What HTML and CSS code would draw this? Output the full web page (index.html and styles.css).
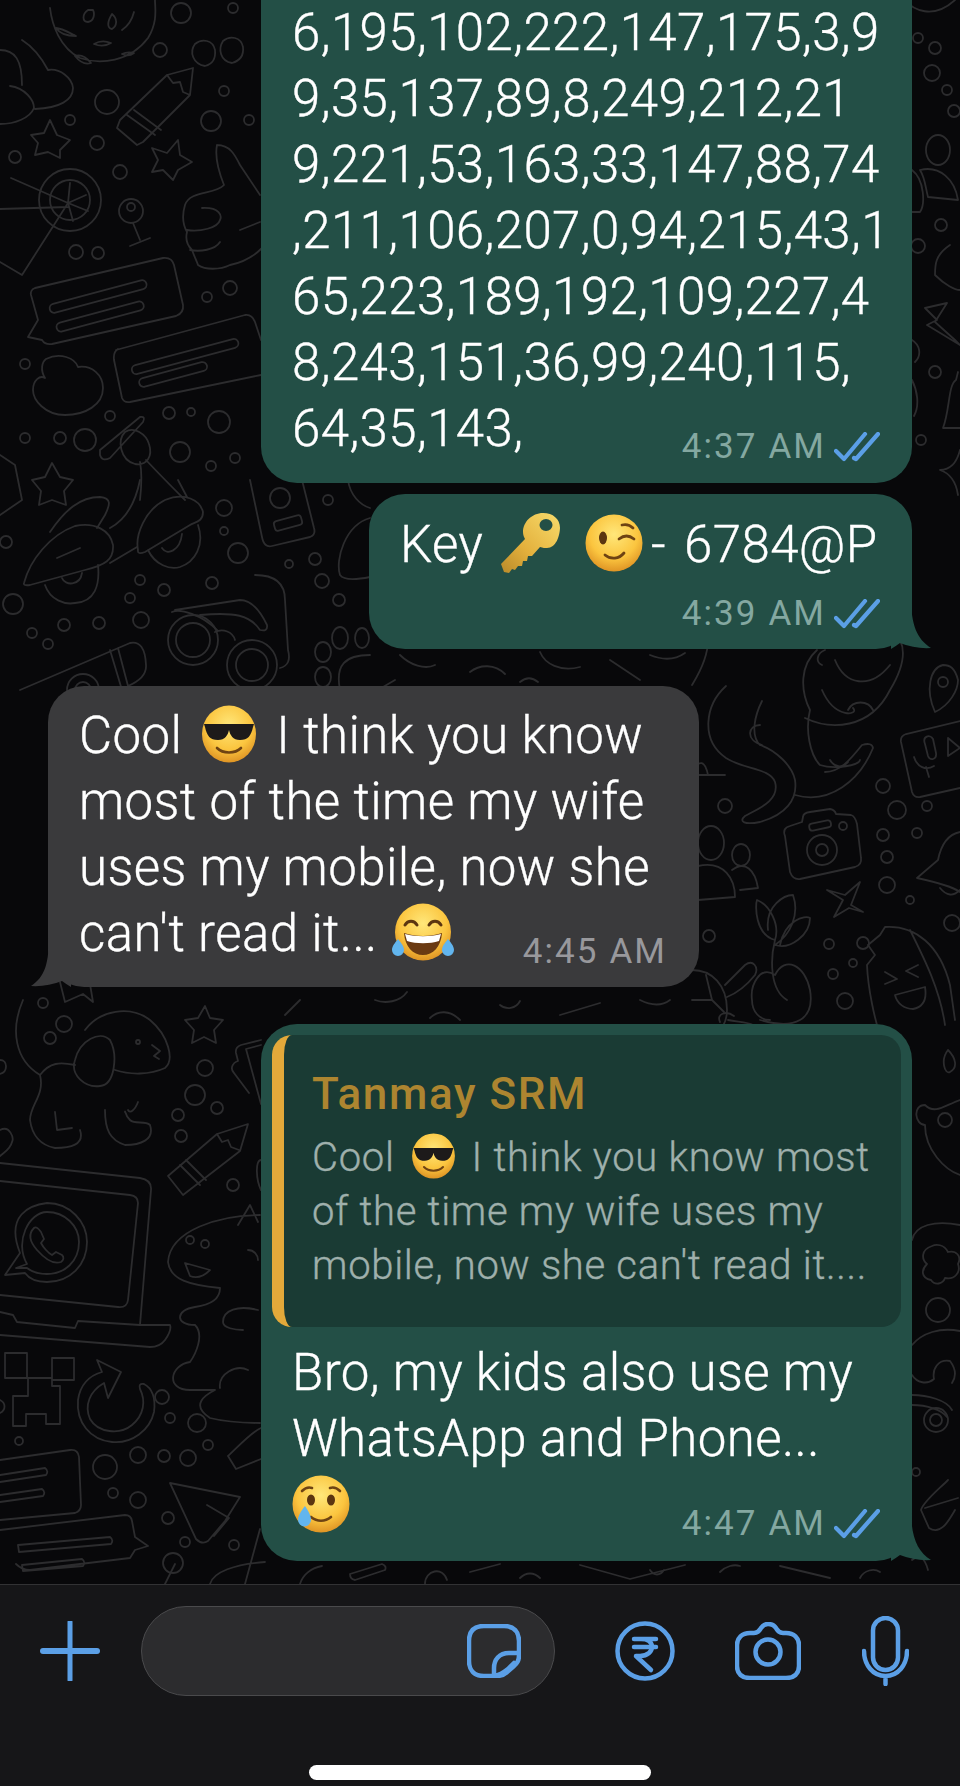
FILE: index.html
```html
<!DOCTYPE html>
<html lang="en">
<head>
<meta charset="UTF-8">
<meta name="viewport" content="width=device-width, initial-scale=1.0">
<title>Chat</title>
<link rel="stylesheet" href="styles.css">
</head>
<body>

<svg class="sprites" width="0" height="0">
    <defs>
        <radialGradient id="face" cx="50%" cy="35%" r="70%">
            <stop offset="0" stop-color="#ffe77a"/>
            <stop offset="0.6" stop-color="#fbc53f"/>
            <stop offset="1" stop-color="#d98a1f"/>
        </radialGradient>
        <linearGradient id="gold" x1="1" y1="0" x2="0" y2="1">
            <stop offset="0" stop-color="#f8dc6c"/>
            <stop offset="0.6" stop-color="#e3b03c"/>
            <stop offset="1" stop-color="#b98a2a"/>
        </linearGradient>
        <symbol id="check" viewBox="0 0 46 30">
            <path d="M2 19l8 8 21-25M20 26l2 1L44 2" fill="none" stroke="#5b9fe6" stroke-width="4.200" stroke-linecap="round" stroke-linejoin="round"/>
        </symbol>
        <symbol id="cool" viewBox="0 0 56 58">
            <ellipse cx="28" cy="29" rx="27" ry="28.5" fill="url(#face)"/>
            <path d="M3 19h50l-1 3c-2 9-5 13-13 13-7 0-10-5-11-10-1 5-4 10-11 10-8 0-11-4-13-13z" fill="#1d1a1a"/>
            <path d="M16 43c6 6 18 6 24 0" fill="none" stroke="#6e4313" stroke-width="2.6" stroke-linecap="round"/>
        </symbol>
        <symbol id="wink" viewBox="0 0 58 58">
            <circle cx="29" cy="29" r="28.5" fill="url(#face)"/>
            <ellipse cx="18" cy="24" rx="4" ry="6.5" fill="#5b3510"/>
            <path d="M34 25c5-4 10-4 15 0M37 11c4-1 8 0 11 3M20 41c6 5 14 4 19-2" fill="none" stroke="#6e4313" stroke-width="2.8" stroke-linecap="round"/>
        </symbol>
        <symbol id="laugh" viewBox="0 0 66 58">
            <ellipse cx="33" cy="29" rx="28" ry="28.5" fill="url(#face)"/>
            <path d="M15 22c3-5 9-5 12 0M39 22c3-5 9-5 12 0" fill="none" stroke="#5b3510" stroke-width="3" stroke-linecap="round"/>
            <path d="M14 30c12 4 26 4 38 0-1 14-9 22-19 22S15 44 14 30z" fill="#6a3a12"/>
            <path d="M15 31c11 3 25 3 36 0l-2 7c-9 3-23 3-32 0z" fill="#fff"/>
            <path d="M8 36c3 4 6 7 6 11a6 6 0 0 1-12 0c0-4 3-7 6-11zM58 36c-3 4-6 7-6 11a6 6 0 0 0 12 0c0-4-3-7-6-11z" fill="#62b5ee"/>
        </symbol>
        <symbol id="smiletear" viewBox="0 0 58 58">
            <circle cx="29" cy="29" r="28.5" fill="url(#face)"/>
            <ellipse cx="19" cy="25" rx="4" ry="5.5" fill="#5b3510"/>
            <ellipse cx="39" cy="25" rx="4" ry="5.5" fill="#5b3510"/>
            <path d="M10 16c3-3 7-4 10-3M38 13c3-1 7 0 10 3M19 42c6 5 14 5 20 0" fill="none" stroke="#6e4313" stroke-width="2.6" stroke-linecap="round"/>
            <path d="M13 31c4 6 6 10 6 14a6.500 6.500 0 0 1-13 0c0-4 3-9 7-14z" fill="#62b5ee"/>
        </symbol>
        <symbol id="key" viewBox="0 0 62 62">
            <path d="M60 16c0-9-7-15-17-15-11 0-20 9-20 19 0 3 1 5 2 7L1 52l3 8 5 1 3-4 3 1 3-4 4 0 1-5 4 0 1-5 4 0 8-9c3 1 5 1 7 1 9 0 13-12 13-21z" fill="url(#gold)"/>
            <ellipse cx="46" cy="13" rx="6.500" ry="6" fill="#234f46"/>
        </symbol>
    </defs>
</svg>

<div class="phone">
    <div class="chat">
        <svg class="doodles" viewBox="0 0 960 1584" width="960" height="1584" fill="none" stroke="#2c2c2e" stroke-width="1.8" stroke-linecap="round" stroke-linejoin="round">
            <!-- top left -->
            <path d="M50 8c2 17 10 40 30 50 20 7 50 4 68-20 10-16 7-30 7-38M88 10c-6 4-6 12 0 12 6-1 7-8 5-12zM112 14c-5 8-5 14 0 15 5-3 6-10 0-15zM134 12c-2 8-6 14-12 18M94 44c5-3 12-3 17-1-5 3-12 3-17 1zM75 56c6-2 12 2 16 7-6 2-12-2-16-7zM122 54c4-2 8-2 12-1-4 3-8 3-12 1zM56 28c5 0 12 4 20 8-8 0-16-2-20-8z"/>
            <path d="M0 50c15 0 22 10 22 35M10 86c15 2 24 14 24 22-4 10-19 16-34 16M48 70c12-2 24 8 25 18 0 12-13 20-38 21M22 40c8 5 18 15 26 30"/>
            <path d="M193 68l-26 7-47 45-3 8 20 17 6-3 47-47zM127 115l28 20M134 110l27 20M167 75l6 8 7-1 3 10 7 3"/>
            <path d="M205 66c-12-2-16-14-10-22 7-6 18-4 20 6 1 10-3 14-10 16zM232 63c-12-2-14-14-9-22 7-6 18-4 20 6 1 9-4 14-11 16z"/>
            <path d="M50 120l7 15 13 5-10 10v8l-12-6-13 3 3-12-7-8 13-2zM178 140l2 15 12 7-14 8-5 10-10-10-11 2 6-12-6-12 15 5z"/>
            <path d="M217 145c13 0 18 10 23 20l20 30M217 145c-2 10 1 25 7 40-9 10-34 5-39 20-3 10-2 20 2 27-2 8 0 13 5 18 3 8 5 12 6 15 7 5 22 5 32 0 15-3 25-10 32-17M202 208c18-1 20 8 18 12-2 8-20 12-33 10M190 250c10 2 25 0 30-8M240 230l20-8"/>
            <circle cx="70" cy="200" r="31"/><circle cx="70" cy="200" r="20"/>
            <path d="M68 203l2-20M68 203l18-8M68 203l20 8M68 203l5 18M11 178l57 25-46 72-22-13M0 209l68-2"/>
            <circle cx="131" cy="211" r="12"/><circle cx="131" cy="207" r="4"/>
            <path d="M133 223l7 17M130 246l20-8"/>
            <path d="M35 288l128-30q9-1 11 7l9 40q1 8-7 11L52 344q-7 1-10-4l-14-3 10-17-7-25q-1-5 4-7z"/>
            <rect x="48" y="292" width="100" height="9" rx="4.500" transform="rotate(-15 98 296)"/>
            <rect x="55" y="312" width="90" height="9" rx="4.500" transform="rotate(-15 100 316)"/>
            <path d="M116 350l129-35q7-1 10 7l6 18M261 375l-131 27q-6 1-8-4l-8-38q-1-8 4-11"/>
            <rect x="130" y="352" width="110" height="9" rx="4.500" transform="rotate(-15 185 356)"/>
            <rect x="138" y="370" width="70" height="9" rx="4.500" transform="rotate(-15 173 374)"/>
            <path d="M46 359c14-7 29-1 32 8 14-2 25 8 25 21 0 17-18 27-38 27s-32-15-32-25 7-15 12-12c-5-8-3-16 1-19z"/>
            <path d="M100 450l40-33q6-1 3 5l-33 36q-8 4-10-3zM125 432c-8 8-5 28 10 32 12 2 18-8 14-20-3-10-15-18-24-12zM146 460c14 15 29 30 39 40M140 462c2 10 2 20 0 38"/>
            <path d="M52 463l8 14 13 3-9 11 2 14-14-5-13 5 2-14-9-11 13-3zM0 455l15 10 7 35-22 15"/>
            <!-- scooter and glasses -->
            <path d="M24 583c6-23 26-48 51-57 20-4 35 4 38 19 1 15-8 20-28 25l-55 15q-7 1-6-2zM50 532c15-22 30-35 50-35 12 1 10 8 5 18l-8 13M110 528c15-8 25-23 30-48M45 585c5 15 20 20 30 18 20-1 25-18 23-38M57 558l23-10M62 578c3 8 18 8 20-5M110 563l27-16"/>
            <path d="M138 550c-3-15 7-40 27-50 20-8 35 0 38 12 0 10-8 10-13 13l-45 27q-8 3-7-2zM148 550c7 15 22 20 32 17 15-5 25-22 18-42M162 548c5 8 18 3 20-14M178 480l9 17"/>
            <path d="M250 480l12 57q2 11 10 9l38-9q6-2 4-9l-12-48"/>
            <circle cx="280" cy="498" r="10"/>
            <rect x="274" y="518" width="28" height="10" rx="3" transform="rotate(-15 288 523)"/>
            <circle cx="193" cy="640" r="25"/><circle cx="193" cy="640" r="17"/>
            <circle cx="252" cy="665" r="25"/><circle cx="252" cy="665" r="16"/>
            <path d="M175 610l65-10q15 0 27 25 1 7-7 5c-10-15-25-18-60-15M172 612c8-4 30 3 45 18M255 575q30 0 30 25l3 50q4 15-8 18M215 632c8-4 18 0 20 8"/>
            <ellipse cx="340" cy="638" rx="8" ry="11"/><ellipse cx="362" cy="638" rx="7" ry="10"/>
            <ellipse cx="323" cy="652" rx="8" ry="10"/><ellipse cx="323" cy="677" rx="8" ry="10"/>
            <path d="M340 690c-5-25 5-35 30-35M20 690l110-47q15-3 16 22 1 13-18 21M110 650l12 40M118 648l10 38M370 518c-25 7-35 42-30 57q5 7 30 2M348 480c2 15 12 25 22 28"/>
            <circle cx="83" cy="690" r="16"/><circle cx="83" cy="690" r="8"/>
            <path d="M400 655c10 10 25 15 35 10M470 672c10-8 25-8 35 2M540 652c5 12 20 20 40 15M610 660l30 20M650 655c12 5 25 5 35-2M395 680l-12 7M520 682c6-5 12-5 18 0"/>
            <!-- right of the incoming bubble -->
            <path d="M708 640c0 20-13 40-16 45M726 686c-21 19-26 54 0 72 19 12 44 10 49 24 5 18-15 26-30 34-7 6 0 9 15 6 25-7 38-22 35-42-3-15-20-30-35-35-10-10-5-30 2-44M760 725c-12 0-15 15 2 20M795 795c35 10 65-15 78-47q-1-6-11-3c-12 15-22 27-37 27"/>
            <path d="M690 775c15 0 30 0 35 0M690 770c10-10 15-10 18 5"/>
            <path d="M817 650c-17 15-17 40-7 60-5 20 0 45 10 55 15 5 40 0 40-5M805 718c25 12 65 12 85-28 15-25 15-40 10-50M835 660c10 25 35 30 55 5M822 690c13 30 38 25 31 18M830 760c5 8 12 8 18 2M848 710c5-10 20-10 25 0M825 650c-8 3-10 12-3 15"/>
            <path d="M943 665c-13 3-18 25-8 47 15-7 23-22 23-32-3-12-8-15-15-15z"/>
            <circle cx="943" cy="682" r="5"/>
            <path d="M960 721l-54 13q-6 2-5 8l11 50q2 6 8 5l40-9M925 744c-3-8 5-10 8-5l3 14c1 7-6 8-8 3zM914 757c3 10 12 14 20 9M926 767l3 10M948 738l12 10-12 8z"/>
            <path d="M785 836q-3-8 5-10l12-4 1-5q0-4 7-5l20-3q5 1 6 5l15 1q4 1 6 9l4 34q1 7-6 9l-55 12q-7 1-10-7z"/>
            <circle cx="822" cy="850" r="15"/><circle cx="822" cy="850" r="6"/><circle cx="843" cy="826" r="4"/>
            <rect x="809" y="822" width="22" height="7" rx="3" transform="rotate(-12 820 825)"/>
            <path d="M960 832c-15 3-20 18-22 28l-21 18q33 7 43 14M940 888q10 12 20 2"/>
            <path d="M860 882l-9 23 12 7-14-4-15 9 9-17-16-10 18 5z"/>
            <ellipse cx="711" cy="843" rx="13" ry="17"/><ellipse cx="741" cy="855" rx="9" ry="11"/>
            <path d="M698 866c27-6 37 14 37 31l-37 3M732 870c13-10 23 0 26 18l-18 2"/>
            <path d="M760 1020c35 10 55 0 50-30-5-25-25-35-35-15-15-10-25 10-23 25 0 12 8 20 18 20M787 1000c-17-10-17-40-12-60M775 940c-20-5-20-35-18-40 13 5 23 25 18 40M768 930c-3-25 17-35 25-35 7 20-3 40-18 50M780 945c5-25 25-30 30-27 0 17-20 32-35 27"/>
            <path d="M867 965l8-10-7-10 12-10 5-8c30-2 55 18 65 58l5 35M867 965c1 25 8 55 13 70M910 930c15 30 30 60 35 95M885 972l12 7-12 5M918 965l-12 6 12 6M895 995l30-8c2 12-2 20-12 22-8 0-16-5-18-14z"/>
            <path d="M692 970c20 0 35 15 35 40 0 20-15 30-35 32M725 985l20-20c8-6 14 2 10 10-8 10-18 18-28 22M692 1000l20 0 12 12M712 1000l-6-25M728 1020c10 2 20 2 25 5-5 6-15 6-27 2"/>
            <ellipse cx="938" cy="150" rx="12" ry="15"/>
            <path d="M920 170c20-5 35 10 38 30l-30-3c-3-12-3-19-8-27zM912 170c13 10 13 35 8 42h-8M950 245c-15 10-15 20-15 30 10 10 20 15 25 15M925 308l22-5-12 19 20 18 5 5M925 308l12 12-10 5 33 20M958 372l-2 8c-8 5-6 30-13 48h17M960 450q-5 20-20 20 15 5 18 25M912 380c5 10 8 25 2 36M912 340c8 5 10 15 3 22M905 0c8 10 28 20 50 0"/>
            <!-- dog, laptop and friends -->
            <path d="M85 1030c15-20 45-25 65-10 18 15 25 40 15 48-15 7-35 7-50 2M75 1060c5-20 25-30 35-20 8 15 5 45-10 46-15 2-30-11-25-26zM23 1000c-13 30-8 60 17 75 10-13 20-13 35-10M40 1075c5 20-10 30-10 45 2 15 10 25 25 28 15 0 30-3 25-18M55 1112l2 18 15-2M105 1110c0 20 5 30 20 35 15 0 30-5 25-20-5-5-15 0-20-5-5-5-5-10-5-8M138 1102c-3 8-8 12-10 8M152 1045l8 6-6 5 5 3"/>
            <circle cx="138" cy="1042" r="2"/>
            <path d="M60 982l5 20 18-8 10 8-3-18M205 1006l5 12 13 2-9 10 2 13-12-6-12 6 2-13-9-10 13-2z"/>
            <path d="M248 1124l-31 10-49 42 15 19 57-44zM180 1165l20 20M186 1160l20 20M217 1134l5 8 6-2 3 7 8 3"/>
            <path d="M261 1040l-20 5q-6 2-5 8l2 8c-6 2-8 8-4 12l15 20M261 1045l-15 4 15 55M261 1160c-6 0-5 20 0 30"/>
            <path d="M0 1163l140 15q12 2 11 12l-11 135M0 1181l130 14q8 1 8 8l-10 97q-1 8-10 7L0 1295M0 1312l13 3 4 7 58 6 3-7 62 4h30q2 5-5 15-5 7-15 7L0 1335"/>
            <path d="M5 1275l15-22c-15-38 10-48 27-50 23 0 40 19 40 39 0 23-17 40-40 40-9 0-17-2-22-9zM16 1268l11-4c-13-22 2-52 20-52 18 0 32 14 32 30 0 20-15 32-32 32-8 0-15-2-20-6z"/>
            <path d="M34 1228c-6 6-4 14 3 22 8 9 16 15 24 12 3-2 3-5 1-7l-6-3-4 3c-4-2-9-8-11-12l3-4-3-7c-2-3-5-6-7-4z"/>
            <path d="M5 1353h22v25H5zM52 1358h22v22H52zM28 1378h24v8h8v38H46v-10H26v12H13v-30h15z"/>
            <path d="M97 1360l24 12-13 26-4-15c-14 8-20 22-14 36 8 14 30 16 42 6 12-10 14-24 8-36q-2-6 4-5c8 4 12 14 10 28-4 18-22 32-42 30-22-2-36-20-34-42 2-14 10-24 24-28z"/>
            <path d="M260 1215c-40 0-90 15-92 47 2 18 22 23 52 26 0 12-10 17-25 19-20 3-20 18 0 18 10 10 0 30-5 37-20 3-25 28 0 28h25c-10 5-25 15-5 28 20 5 45 5 50 5M238 1225l12-20 8 17M185 1263l25 7q-10 10-20 6zM248 1250c6 0 10 5 10 10M258 1310c-20-5-35 0-35 12 0 6 12 8 20 8M248 1370c-12-6-30 4-28 18"/>
            <circle cx="190" cy="1240" r="4"/><circle cx="205" cy="1244" r="4"/>
            <path d="M0 1460l70-10q8-1 9 7l2 48q0 6-6 8L0 1520M0 1475l45-7q4 3 1 7l-46 7M0 1495l42-6q4 3 1 7l-43 6"/>
            <path d="M0 1530l125-15q6 0 7 6l3 16 13 9-13 4-5 8L30 1570q-8 0-14-6M18 1545l92-8q4 3 1 7l-92 8zM22 1565l60-6q4 3 1 7l-60 5z"/>
            <path d="M170 1483l70 14-15 24-17 20q-6 4-12-2zM207 1505l22 13-15 18M261 1428c-10 4-26 22-33 28l8 13 25-10"/>
            <path d="M210 1584c3-12 25-20 55-22M245 1584l15-55M165 1584l10-20"/>
            <path d="M0 1400c6 3 6 10 0 13M0 1130c10-5 14 8 12 12-2 8-8 10-12 14M0 1060c8 0 8 12 0 14"/>
            <!-- right strip below -->
            <path d="M948 1050c-8 10-3 25 2 22 8-4 6-14-2-22zM960 1100c-15 5-25 15-35 5-13 0-10 20 0 20 0 25 20 45 35 50M912 1240c3-15 23-20 48-15M932 1246c-12 4-10 14-5 18-6 6-6 14 4 16 4 6 12 4 14-2 10 2 16-6 13-14 4-8-2-14-10-12-4-8-12-8-16-6zM912 1345c10-12 28-18 48-14M912 1375c5 8 15 10 22 4-2-10 4-20 16-18 6 8 6 16 2 22M912 1395c15 0 35 5 40 15M912 1405c15 0 30 5 35 12M948 1480c-10 10-25 22-27 30l8 18c12 8 20-8 26-18M925 1508l33-10M912 1560c6-5 12-5 16 10"/>
            <circle cx="945" cy="1120" r="7"/><circle cx="938" cy="1310" r="12"/>
            <circle cx="936" cy="1420" r="12"/><circle cx="936" cy="1420" r="6"/><circle cx="916" cy="1472" r="4"/>
            <path d="M300 1584c3-10 12-16 22-18M350 1574l32-10q5 2 3 6l-30 10q-5-1-5-6zM425 1584c0-14 18-18 22-4M470 1572l30-8M520 1578c6-6 14-6 20 0M580 1565l50 14 55-14M650 1570c4 6 10 6 14 0M720 1572c6-6 14-8 20-6M780 1566l50 12M860 1578c4-8 14-10 20-6M375 1000c10 4 25 2 32-8M430 1018c8-8 20-8 30 2M500 1005c6 5 16 4 20-4M560 1015l40-12M640 1000c12 6 22 6 30 0M300 1000l-15 15M720 1022c-4-8 6-12 14-6"/>
            <g>
                <circle cx="181" cy="13" r="10"/><circle cx="233" cy="8" r="5"/><circle cx="160" cy="50" r="7"/>
                <circle cx="107" cy="102" r="12"/><circle cx="70" cy="120" r="5"/><circle cx="97" cy="143" r="7"/>
                <circle cx="15" cy="157" r="6"/><circle cx="120" cy="172" r="7"/><circle cx="211" cy="121" r="10"/>
                <circle cx="224" cy="91" r="5"/><circle cx="249" cy="120" r="5"/><circle cx="76" cy="252" r="7"/>
                <circle cx="98" cy="253" r="6"/><circle cx="230" cy="288" r="7"/><circle cx="207" cy="297" r="5"/>
                <circle cx="25" cy="364" r="5"/><circle cx="110" cy="416" r="5"/><circle cx="60" cy="438" r="6"/>
                <circle cx="25" cy="438" r="5"/><circle cx="85" cy="440" r="11"/><circle cx="169" cy="413" r="6"/>
                <circle cx="191" cy="412" r="4"/><circle cx="219" cy="422" r="11"/><circle cx="180" cy="452" r="10"/>
                <circle cx="235" cy="458" r="5"/><circle cx="211" cy="466" r="5"/>
                <circle cx="224" cy="508" r="8"/><circle cx="224" cy="531" r="4"/><circle cx="238" cy="553" r="10"/>
                <circle cx="6" cy="542" r="6"/><circle cx="140" cy="580" r="5"/><circle cx="164" cy="590" r="6"/>
                <circle cx="130" cy="598" r="5"/><circle cx="212" cy="583" r="6"/><circle cx="13" cy="604" r="10"/>
                <circle cx="64" cy="625" r="6"/><circle cx="99" cy="623" r="6"/><circle cx="141" cy="620" r="8"/>
                <circle cx="32" cy="633" r="5"/><circle cx="48" cy="644" r="5"/><circle cx="328" cy="500" r="5"/>
                <circle cx="315" cy="559" r="6"/><circle cx="289" cy="564" r="4"/><circle cx="322" cy="581" r="7"/>
                <circle cx="339" cy="600" r="6"/>
                <circle cx="883" cy="786" r="7"/><circle cx="897" cy="810" r="9"/><circle cx="927" cy="806" r="5"/>
                <circle cx="883" cy="835" r="6"/><circle cx="917" cy="833" r="5"/><circle cx="887" cy="857" r="6"/>
                <circle cx="887" cy="885" r="8"/><circle cx="910" cy="900" r="4"/><circle cx="725" cy="806" r="7"/>
                <circle cx="709" cy="936" r="6"/><circle cx="829" cy="944" r="5"/><circle cx="863" cy="943" r="6"/>
                <circle cx="853" cy="963" r="4"/><circle cx="833" cy="974" r="5"/><circle cx="845" cy="1001" r="8"/>
                <circle cx="952" cy="923" r="8"/>
                <circle cx="918" cy="38" r="5"/><circle cx="935" cy="48" r="6"/><circle cx="932" cy="73" r="8"/>
                <circle cx="947" cy="90" r="5"/><circle cx="954" cy="111" r="6"/><circle cx="941" cy="225" r="6"/>
                <circle cx="918" cy="246" r="7"/><circle cx="935" cy="372" r="6"/><circle cx="921" cy="440" r="5"/>
                <circle cx="43" cy="1003" r="5"/><circle cx="64" cy="1024" r="8"/><circle cx="50" cy="1038" r="6"/>
                <circle cx="205" cy="1068" r="8"/><circle cx="195" cy="1095" r="10"/><circle cx="178" cy="1115" r="6"/>
                <circle cx="217" cy="1108" r="6"/><circle cx="181" cy="1136" r="6"/><circle cx="233" cy="1185" r="6"/>
                <circle cx="162" cy="1397" r="7"/><circle cx="170" cy="1418" r="5"/><circle cx="197" cy="1423" r="9"/>
                <circle cx="19" cy="1441" r="4"/><circle cx="138" cy="1455" r="8"/><circle cx="105" cy="1467" r="12"/>
                <circle cx="164" cy="1456" r="6"/><circle cx="188" cy="1458" r="8"/><circle cx="208" cy="1445" r="5"/>
                <circle cx="113" cy="1493" r="5"/><circle cx="138" cy="1500" r="8"/><circle cx="168" cy="1518" r="6"/>
                <circle cx="185" cy="1542" r="5"/><circle cx="173" cy="1563" r="10"/><circle cx="234" cy="1545" r="5"/>
            </g>
        </svg>

        <div class="messages">
            <div class="bubble out wide first">
                <div>6,195,102,222,147,175,3,9</div>
                <div>9,35,137,89,8,249,212,21</div>
                <div>9,221,53,163,33,147,88,74</div>
                <div>,211,106,207,0,94,215,43,1</div>
                <div>65,223,189,192,109,227,4</div>
                <div>8,243,151,36,99,240,115,</div>
                <div class="last-row">
                    <span>64,35,143,</span>
                    <span class="meta">4:37 AM <svg class="check"><use href="#check"/></svg></span>
                </div>
            </div>

            <div class="bubble out grouped tail-out key-msg">
                <div>Key<svg class="emoji key-icon"><use href="#key"/></svg><svg class="emoji wink-icon"><use href="#wink"/></svg>-<span class="key-code">6784@P</span></div>
                <div class="meta-row">
                    <span class="meta">4:39 AM <svg class="check"><use href="#check"/></svg></span>
                </div>
            </div>

            <div class="bubble in tail-in wide">
                <div>Cool<svg class="emoji cool-icon"><use href="#cool"/></svg>I think you know</div>
                <div>most of the time my wife</div>
                <div>uses my mobile, now she</div>
                <div class="last-row">
                    <span>can't read it...<svg class="emoji laugh-icon"><use href="#laugh"/></svg></span>
                    <span class="meta">4:45 AM</span>
                </div>
            </div>

            <div class="bubble out reply tail-out wide">
                <div class="quote">
                    <div class="quote-name">Tanmay SRM</div>
                    <div>Cool<svg class="emoji quote-emoji"><use href="#cool"/></svg>I think you know most</div>
                    <div>of the time my wife uses my</div>
                    <div>mobile, now she can't read it....</div>
                </div>
                <div class="reply-body">
                    <div>Bro, my kids also use my</div>
                    <div>WhatsApp and Phone...</div>
                    <div class="last-row">
                        <svg class="emoji tear-icon"><use href="#smiletear"/></svg>
                        <span class="meta">4:47 AM <svg class="check"><use href="#check"/></svg></span>
                    </div>
                </div>
            </div>
        </div>
    </div>

    <div class="composer">
        <div class="composer-row">
            <svg class="icon plus" viewBox="0 0 60 60"><path d="M30 1v58"/><path d="M3 30h54" stroke-width="6"/></svg>
            <div class="input">
                <svg class="icon sticker" viewBox="0 0 54 54">
                    <path d="M17 2h20c10 0 15 6 15 15v14c0 6-2 8-5 11l-8 7c-3 3-6 3-10 3H17C7 52 2 46 2 37V17C2 7 7 2 17 2z"/>
                    <path d="M52 29H42c-10 0-15 7-15 15v8M27 52c6-1 9-3 14-7l6-6"/>
                </svg>
            </div>
            <svg class="icon rupee" viewBox="0 0 60 60">
                <circle cx="30" cy="30" r="27.500"/>
                <path d="M19 18h22M19 26h22M26 18c8 0 11 4 11 8s-4 9-12 9h-4l15 14"/>
            </svg>
            <svg class="icon camera" viewBox="0 0 66 58">
                <path d="M15 11h4c4 0 5-2 7-5 2-3 4-4 7-4s6 1 8 4c2 3 3 5 7 5h3c8 0 13 5 13 12v21c0 8-5 12-13 12H15C7 56 2 52 2 44V23c0-7 5-12 13-12z"/>
                <circle cx="33" cy="30" r="12.500"/>
            </svg>
            <svg class="icon mic" viewBox="0 0 47 70">
                <rect x="11" y="2" width="25" height="52" rx="12.500"/>
                <path d="M2 35c0 14 9 25 21.500 25S45 49 45 35M23.500 60v8"/>
            </svg>
        </div>
        <div class="home-bar"></div>
    </div>
</div>

</body>
</html>
```

FILE: styles.css
```css
* {
    box-sizing: border-box;
}
body {
    margin: 0;
    background-color: #08080a;
    font-family: Roboto, "Liberation Sans", sans-serif;
}
.sprites {
    display: block;
    height: 0;
}
.phone {
    width: 960px;
    height: 1786px;
    overflow: hidden;
}
.chat {
    display: grid;
    height: 1584px;
    overflow: hidden;
    background-color: #08080a;
}
.doodles, .messages {
    grid-area: 1 / 1;
}
.doodles {
    display: block;
}
.messages {
    display: flex;
    flex-direction: column;
    justify-content: flex-end;
    align-items: flex-end;
    height: 1584px;
    min-height: 0;
    padding: 0 48px 23px 48px;
}
.bubble {
    position: relative;
    flex-shrink: 0;
    margin-top: 37px;
    padding: 16px 32px 20px 31px;
    border-radius: 36px;
    color: #fff;
    font-size: 51px;
    font-weight: 300;
    line-height: 66px;
    letter-spacing: 0.4px;
    -webkit-text-stroke: 0.35px;
    white-space: nowrap;
}
.out {
    background-color: #234f46;
}
.in {
    align-self: flex-start;
    padding-top: 17px;
    background-color: #3a3a3c;
}
.wide {
    width: 651px;
}
.first {
    margin-top: 0;
    padding-bottom: 21px;
    border-radius: 0 0 36px 36px;
}
.grouped {
    margin-top: 11px;
}
.key-msg {
    width: 543px;
    padding-top: 18px;
}
.key-code {
    margin-left: 18px;
}
.last-row {
    display: flex;
    justify-content: space-between;
    align-items: flex-end;
}
.meta-row {
    display: flex;
    justify-content: flex-end;
    margin-top: 18px;
}
.meta {
    display: inline-flex;
    align-items: center;
    margin-bottom: -3px;
    font-size: 35px;
    font-weight: 400;
    line-height: 36px;
    letter-spacing: 2.1px;
    -webkit-text-stroke: 0;
    color: #84a8a1;
}
.in .meta {
    color: #98989c;
}
.check {
    width: 46px;
    height: 30px;
    margin-left: 8px;
}
.tail-out::after, .tail-in::after {
    content: "";
    position: absolute;
    bottom: 0;
    width: 40px;
    height: 52px;
    background-color: inherit;
}
.tail-out::after {
    right: -19px;
    clip-path: path("M20 0C20 28 26 42 40 51Q24 52 9 46Q5 49 0 52L0 0Z");
}
.tail-in::after {
    left: -17px;
    clip-path: path("M18 0C18 28 14 42 0 51Q16 52 31 46Q35 49 40 52L40 0Z");
}
.emoji {
    display: inline-block;
}
.key-icon {
    width: 62px;
    height: 62px;
    margin: 0 23px 0 17px;
    vertical-align: -12px;
}
.wink-icon {
    width: 58px;
    height: 58px;
    margin-right: 8px;
    vertical-align: -10px;
}
.cool-icon {
    width: 58px;
    height: 58px;
    margin: 0 18px;
    vertical-align: -10px;
}
.laugh-icon {
    width: 66px;
    height: 58px;
    margin-left: 12px;
    vertical-align: -10px;
}
.tear-icon {
    width: 58px;
    height: 58px;
    margin: 3px 0 6px 0;
}
.reply {
    padding: 11px 11px 22px 11px;
}
.quote {
    height: 292px;
    padding: 32px 0 0 28px;
    border-left: 12px solid #e3a93a;
    border-radius: 20px;
    background-color: #1a3b34;
    color: #9fb0ac;
    font-size: 40px;
    line-height: 54px;
    letter-spacing: 0.7px;
}
.quote-name {
    margin-bottom: 10px;
    color: #ad8530;
    font-size: 44px;
    font-weight: 500;
    line-height: 54px;
    letter-spacing: 1.6px;
    -webkit-text-stroke: 0;
}
.quote-emoji {
    width: 47px;
    height: 46px;
    margin: 0 15px;
    vertical-align: -8px;
}
.reply-body {
    margin-top: 13px;
    padding: 0 21px 0 20px;
}
.composer {
    display: flex;
    flex-direction: column;
    height: 202px;
    border-top: 1px solid #323234;
    background-color: #161618;
}
.composer-row {
    display: flex;
    align-items: center;
    height: 90px;
    margin-top: 21px;
    padding-left: 40px;
}
.icon {
    flex-shrink: 0;
    fill: none;
    stroke: #5b9fe6;
    stroke-width: 4.5;
    stroke-linecap: round;
    stroke-linejoin: round;
}
.plus {
    width: 60px;
    height: 60px;
    margin-right: 41px;
    stroke-width: 5;
}
.input {
    display: flex;
    justify-content: flex-end;
    align-items: center;
    width: 414px;
    height: 90px;
    margin-right: 60px;
    padding-right: 33px;
    border: 1px solid #4a4a4c;
    border-radius: 45px;
    background-color: #2c2c2e;
}
.sticker {
    width: 54px;
    height: 54px;
}
.rupee {
    width: 60px;
    height: 60px;
    margin-right: 60px;
}
.camera {
    width: 66px;
    height: 58px;
    margin-right: 61px;
}
.mic {
    width: 47px;
    height: 70px;
}
.home-bar {
    width: 342px;
    height: 15px;
    margin: 69px auto 0 auto;
    border-radius: 8px;
    background-color: #fff;
}
```
